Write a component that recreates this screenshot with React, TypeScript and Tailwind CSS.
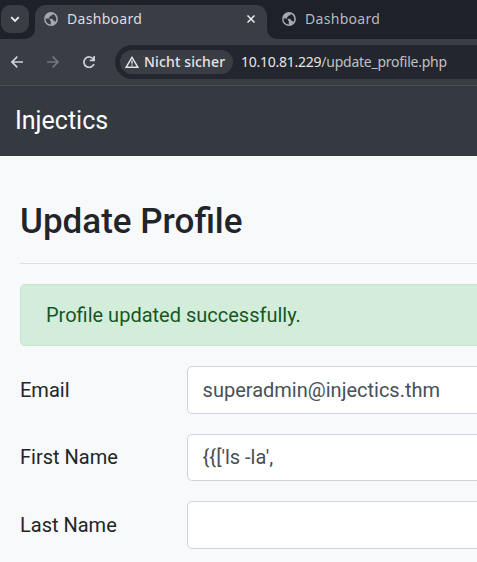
import React from "react";

function Globe({ land }: { land: string }) {
  return (
    <svg className="size-[14px] shrink-0" viewBox="0 0 14 14">
      <circle cx="7" cy="7" r="6.9" fill="#a6a9b3" />
      <path d="M8.600 1.700C9 3 8 3.500 6.900 3.600c-.9.100-.5 1.100-1.300 1.400-.6.200-.9.500-.6 1.200.4.700 1.300.4 2.300.5 1.200.1 1.300 1 1.700 1.500.5.600 1.400.3 1.800 1l.2 1.200A5.500 5.500 0 0 0 8.600 1.700M1.500 6.600h2.800c1.200 0 1.600.7 1.600 1.500 0 .6.900.6.900 1.300v3.100A5.500 5.500 0 0 1 1.500 6.600" fill={land} />
    </svg>
  );
}

function TabStrip() {
  return (
    <div className="flex h-[39px] bg-[#1e2129]">
      <div className="relative w-[35px] shrink-0">
        <button className="mt-[5px] ml-px flex h-7 w-7 items-center justify-center rounded-[9px] bg-[#3b3d45] text-[#eceef2]">
          <svg width="10" height="7" viewBox="0 0 10 7" fill="none" stroke="currentColor" strokeWidth="1.8"><path d="M1.2 1.2 5 5l3.800-3.800" /></svg>
        </button>
        <svg className="absolute right-0 bottom-0" width="10" height="10"><path d="M10 0v10H0A10 10 0 0 0 10 0" fill="#3b3d45" /></svg>
      </div>
      <div className="mt-[5px] flex h-[34px] w-[232px] shrink-0 items-center rounded-t-[11px] bg-[#3b3d45] pr-[12px] pb-[6px] pl-[9px] text-[#dadce1]">
        <Globe land="#3b3d45" />
        <span className="ml-[9px] pb-0.5 text-[14px] leading-[19px] tracking-[0.3px]">Dashboard</span>
        <svg className="ml-auto size-2" viewBox="0 0 8 8" fill="none" stroke="#eceef2" strokeWidth="1.5"><path d="m.5.5 7 7m0-7-7 7" /></svg>
      </div>
      <div className="relative flex h-[39px] shrink-0 items-center pb-px pl-[15px] text-[#b8bac2]">
        <svg className="absolute bottom-0 left-0" width="10" height="10"><path d="M0 0v10h10A10 10 0 0 1 0 0" fill="#3b3d45" /></svg>
        <Globe land="#1e2129" />
        <span className="ml-[9px] pb-0.5 text-[14px] leading-[19px] tracking-[0.3px]">Dashboard</span>
      </div>
    </div>
  );
}

function Toolbar() {
  return (
    <div className="flex h-[47px] items-center border-b border-[#4b4b50] bg-[#3b3d45] text-[#cfd1d8]">
      <svg className="ml-[11px] h-3 w-3" viewBox="0 0 12 12" fill="none" stroke="currentColor" strokeWidth="1.700"><path d="M12 6H1M6.300.7 1 6l5.300 5.300" /></svg>
      <svg className="ml-6 h-3 w-3" viewBox="0 0 12 12" fill="none" stroke="#74767d" strokeWidth="1.700"><path d="M0 6h11M5.700.7 11 6l-5.300 5.300" /></svg>
      <svg className="ml-6 h-3 w-3" viewBox="0 0 12 12" fill="none" stroke="currentColor" strokeWidth="1.700"><path d="M11 8A5.200 5.200 0 1 1 10.400 3.200M11.200 0v4.400H6.800" /></svg>
      <div className="ml-5 flex h-[34px] min-w-0 flex-1 items-center overflow-hidden rounded-l-[17px] bg-[#24262e] pl-[5px]">
        <div className="flex h-6 w-[113px] shrink-0 items-center rounded-full bg-[#3b3d45] pl-[5px] text-[#e3e5e9]">
          <svg className="h-3 w-[14px]" viewBox="0 0 14 12" fill="none" stroke="currentColor" strokeWidth="1.400"><path d="M7 1.300 12.800 11.200H1.200zM7 4.600v3.100M7 8.400v1.400" /></svg>
          <span className="ml-[5px] pb-0.5 text-[14px] leading-[19px] font-medium tracking-[0.15px] whitespace-nowrap">Nicht sicher</span>
        </div>
        <span className="ml-2 pb-0.5 text-[14px] leading-[19px] tracking-[-0.25px] whitespace-nowrap text-[#bec1c9]"><span className="text-[#e3e5e9]">10.10.81.229</span>/update_profile.php</span>
      </div>
    </div>
  );
}

function Field({ label, value }: { label: string; value: string }) {
  return (
    <label className="mb-5 flex h-[47.5px] items-center">
      <span className="w-[167px] shrink-0">{label}</span>
      <input className="h-full w-[500px] shrink-0 rounded-[5px] border border-[#ced4da] bg-white px-[14.600px] text-[#495057] outline-none" defaultValue={value} />
    </label>
  );
}

export default function App() {
  return (
    <div className="h-[562px] w-full overflow-hidden bg-[#f8f9fa]">
      <header className="font-['Noto_Sans',sans-serif]">
        <TabStrip />
        <Toolbar />
      </header>
      <div className="font-[Roboto,sans-serif] text-[20px] leading-[30px] text-[#212529]">
        <nav className="flex h-[70px] items-center bg-[#343a40] pl-[15px] text-[25px] text-white">Injectics</nav>
        <main className="pt-[45px] pl-5">
          <h3 className="text-[35px] leading-[42px] font-medium">Update Profile</h3>
          <hr className="mt-5 border-[#dfe0e2]" />
          <div className="mt-5 mb-5 flex h-[62px] w-[700px] items-center rounded-[5px] border border-[#c3e6cb] bg-[#d4edda] px-[25px] text-[#155724]">Profile updated successfully.</div>
          <Field label="Email" value="superadmin@injectics.thm" />
          <Field label="First Name" value="{{['ls -la'," />
          <Field label="Last Name" value="" />
        </main>
      </div>
    </div>
  );
}
